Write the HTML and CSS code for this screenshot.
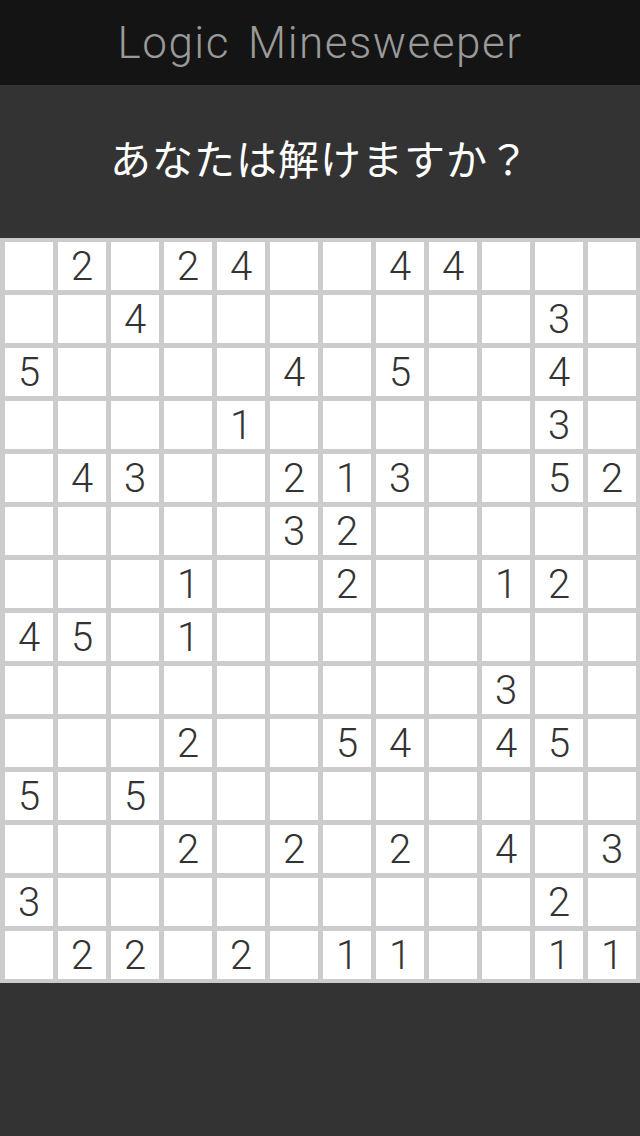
FILE: index.html
```html
<!DOCTYPE html>
<html lang="ja">
<head>
  <meta charset="UTF-8" />
  <meta name="viewport" content="width=device-width, initial-scale=1.0" />
  <title>Logic Minesweeper</title>
  <link rel="stylesheet" href="styles.css">
</head>
<body>
  <div class="header">
    <h1>Logic Minesweeper</h1>
  </div>

  <div class="question">あなたは解けますか？</div>

  <div class="board" id="board"></div>

  <div class="footer"></div>

  <script>
    // 盤面 ("." = 空白)
    const rows = [
      ".2.24..44...",
      "..4.......3.",
      "5....4.5..4.",
      "....1.....3.",
      ".43..213..52",
      ".....32.....",
      "...1..2..12.",
      "45.1........",
      ".........3..",
      "...2..54.45.",
      "5.5.........",
      "...2.2.2.4.3",
      "3.........2.",
      ".22.2.11..11",
    ];

    const board = document.getElementById("board");
    for (const row of rows) {
      for (const ch of row) {
        const cell = document.createElement("div");
        cell.className = "cell";
        if (ch !== ".") cell.innerText = ch;
        board.appendChild(cell);
      }
    }
  </script>
</body>
</html>
```

FILE: styles.css
```css
body {
  margin: 0;
  background-color: #333333;
  font-family: Roboto, "Noto Sans", sans-serif;
}

.header {
  height: 85px;
  background-color: #141414;
  display: flex;
  align-items: center;
  justify-content: center;
}

.header h1 {
  margin: 0;
  font-weight: 300;
  font-size: 44px;
  letter-spacing: 1.5px;
  word-spacing: 6px;
  color: #9a9a9a;
}

.question {
  height: 143px;
  padding-bottom: 10px;
  display: flex;
  align-items: center;
  justify-content: center;
  color: #fff;
  font-family: "Noto Sans CJK JP", sans-serif;
  font-weight: 400;
  font-size: 41px;
  letter-spacing: 1px;
}

.board {
  display: grid;
  grid-template-columns: repeat(12, 1fr);
  grid-auto-rows: 48px;
  gap: 5px;
  padding: 4px 4px 4px 5px;
  background-color: #cccccc;
}

.cell {
  background-color: #fff;
  display: flex;
  align-items: center;
  justify-content: center;
  font-size: 40px;
  font-weight: 300;
  color: #333;
}

.footer {
  height: 153px;
}
```
